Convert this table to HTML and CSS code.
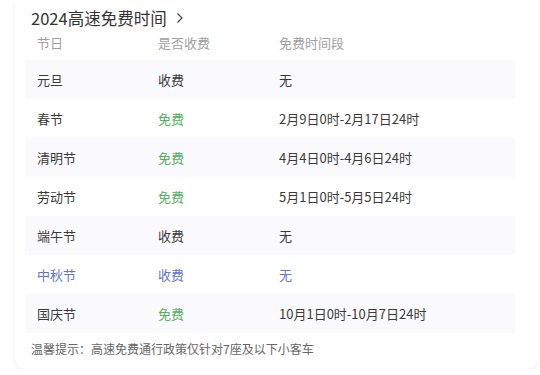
FILE: index.html
```html
<!DOCTYPE html>
<html lang="zh-CN">
<head>
<meta charset="utf-8">
<link rel="stylesheet" href="styles.css">
</head>
<body>
<div class="card">
  <div class="title">
    <span>2024高速免费时间</span>
    <svg class="chev" width="8" height="12" viewBox="0 0 8 12"><path d="M1.5 1.5 L6 6 L1.5 10.5" fill="none" stroke="#444" stroke-width="1.2"/></svg>
  </div>
  <div class="table">
    <div class="row head"><div class="c1">节日</div><div class="c2">是否收费</div><div class="c3">免费时间段</div></div>
    <div class="row alt"><div class="c1">元旦</div><div class="c2">收费</div><div class="c3">无</div></div>
    <div class="row"><div class="c1">春节</div><div class="c2 free">免费</div><div class="c3">2月9日0时-2月17日24时</div></div>
    <div class="row alt"><div class="c1">清明节</div><div class="c2 free">免费</div><div class="c3">4月4日0时-4月6日24时</div></div>
    <div class="row"><div class="c1">劳动节</div><div class="c2 free">免费</div><div class="c3">5月1日0时-5月5日24时</div></div>
    <div class="row alt"><div class="c1">端午节</div><div class="c2">收费</div><div class="c3">无</div></div>
    <div class="row hl"><div class="c1">中秋节</div><div class="c2">收费</div><div class="c3">无</div></div>
    <div class="row alt"><div class="c1">国庆节</div><div class="c2 free">免费</div><div class="c3">10月1日0时-10月7日24时</div></div>
  </div>
  <div class="tip">温馨提示：高速免费通行政策仅针对7座及以下小客车</div>
</div>
</body>
</html>
```
FILE: styles.css
```css
html, body {
  margin: 0;
  padding: 0;
  background: #fff;
}
body {
  font-family: "Noto Sans CJK SC", "Liberation Sans", sans-serif;
  color: #333;
}
.card {
  margin-left: 15px;
  width: 523px;
  padding: 6px 0 8px 0;
  box-sizing: border-box;
  background: #fff;
  border-radius: 0 0 12px 12px;
  box-shadow: 0 1px 6px rgba(0, 0, 0, 0.07);
}
.title {
  display: flex;
  align-items: center;
  gap: 9px;
  padding-left: 16px;
  height: 24px;
  font-size: 16.5px;
  line-height: 24px;
  color: #333;
}
.chev {
  display: block;
  margin-top: -1px;
}
.table {
  margin: 0 23px 0 10px;
}
.row {
  display: flex;
  height: 39px;
  align-items: center;
  font-size: 13px;
  color: #3a3a3a;
}
.row.head {
  height: 30px;
  align-items: flex-start;
  padding-top: 3px;
  box-sizing: border-box;
  color: #a0a0a0;
}
.row.alt {
  background: #fafafc;
}
.row.hl {
  color: #6474cc;
}
.c1, .c2 {
  width: 121px;
  padding-left: 12px;
  box-sizing: border-box;
}
.c3 {
  padding-left: 12px;
}
.c2.free {
  color: #55b062;
}
.tip {
  padding-left: 16px;
  margin-top: 4px;
  font-size: 12px;
  line-height: 24px;
  color: #666;
}
```
